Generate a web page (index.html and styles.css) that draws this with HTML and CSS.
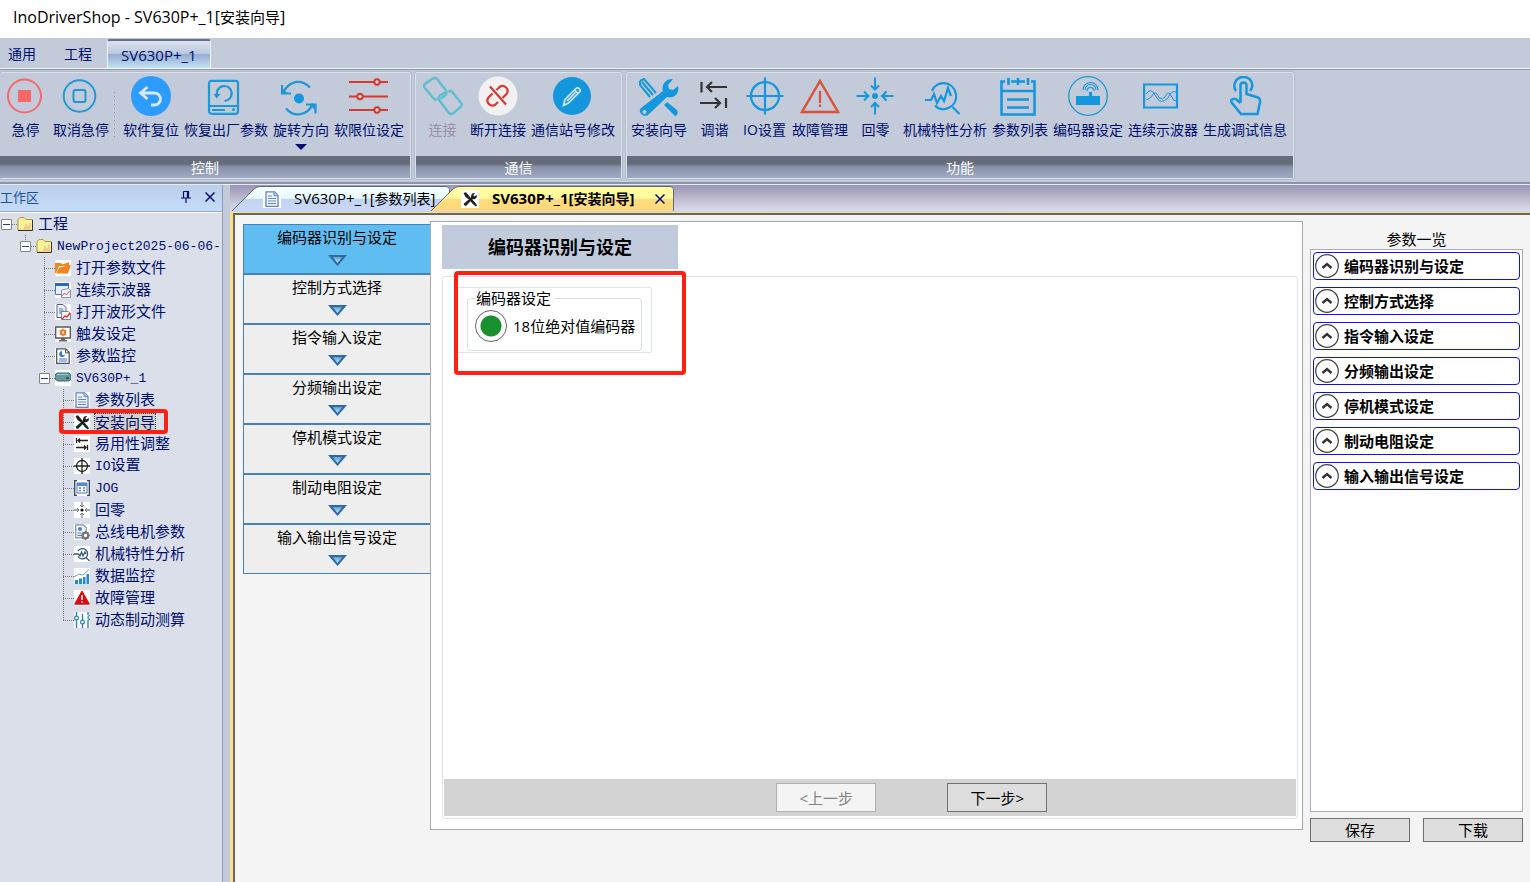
FILE: index.html
```html
<!DOCTYPE html>
<html lang="zh-CN">
<head>
<meta charset="utf-8">
<title>InoDriverShop - SV630P+_1[安装向导]</title>
<link rel="stylesheet" href="styles.css">
</head>
<body>
<svg class="defs" aria-hidden="true">
  <defs>
    <linearGradient id="g-tab" x1="0" y1="0" x2="0" y2="1"><stop offset="0" stop-color="#f2ffff"/><stop offset=".48" stop-color="#e9fbff"/><stop offset=".52" stop-color="#c3d4f3"/><stop offset="1" stop-color="#c9d8f6"/></linearGradient>
    <linearGradient id="g-tab-on" x1="0" y1="0" x2="0" y2="1"><stop offset="0" stop-color="#fffd9c"/><stop offset=".48" stop-color="#fffaa0"/><stop offset=".52" stop-color="#ffdc80"/><stop offset="1" stop-color="#ffd978"/></linearGradient>
    <linearGradient id="g-arrow" x1="0" y1="0" x2="0" y2="1"><stop offset="0" stop-color="#5b9fd0"/><stop offset="1" stop-color="#c5ecfa"/></linearGradient>
    <symbol id="i-down" viewBox="0 0 19 11"><path d="M0 0h19L9.500 11z" fill="#2f68a5"/><path d="M4.500 2h10L9.500 8z" fill="url(#g-arrow)"/></symbol>
    <symbol id="i-up" viewBox="0 0 24 24"><circle cx="12" cy="12" r="11.300" fill="#fff" stroke="#444" stroke-width="1.200"/><path d="M7.500 14L12 10l4.500 4" fill="none" stroke="#333" stroke-width="2.400"/></symbol>
    <symbol id="i-x" viewBox="0 0 10 10"><path d="M.5.5l9 9M9.500.5l-9 9" fill="none" stroke="#000f6e" stroke-width="1.500"/></symbol>
    <symbol id="i-folder" viewBox="0 0 16 16"><path d="M1 3.500l2-2h4l2 2h6.500V14H1z" fill="#fff08c" stroke="#a89848"/><path d="M2 5h13v8.500H2z" fill="#fff29a"/><path d="M8 8h2v2h2V7h2v6H7v-2h1z" fill="#f5c98a"/><path d="M15.500 4v10.500H1" fill="none" stroke="#333"/></symbol>
    <symbol id="i-doc" viewBox="0 0 16 16"><path d="M2 .8h8.500l3.500 3.500v11H2z" fill="#f5f9ff" stroke="#5b82d6" stroke-width="1.300"/><path d="M10 .8v4h4" fill="#b5cbf5" stroke="#5b82d6"/><path d="M4 5h4M4 7.500h8M4 10h8M4 12.500h8" stroke="#5b82d6"/></symbol>
    <symbol id="i-tools" viewBox="0 0 16 16"><path d="M1.500 2l2.500-.8L8 6l5.500 6 1.500 2.500-1.200 1-3-2.500L7 8.500 3.500 6z" fill="#222"/><path d="M2 12.500L9 6.500c-.4-3 1.400-5 4.200-4.500l-1.900 2 1 1.400L14.800 4c.7 2.800-1.800 5-4.300 4.200L4.500 14.500c-1.500 1-3.500-.5-2.500-2z" fill="#222"/></symbol>
    <symbol id="i-scope" viewBox="0 0 16 16"><path d="M.5 1.500h13v11H.5z" fill="#e6efff" stroke="#5270b8"/><path d="M0 1h14v3H0z" fill="#2f62d0"/><path d="M6.500 8l7-1.500 2 1.500v7.500h-9z" fill="#f2f2f2" stroke="#8a95aa"/><path d="M7 14l2.500-3 2 2 3-4" fill="none" stroke="#d55"/></symbol>
    <symbol id="i-wave" viewBox="0 0 16 16"><path d="M2 .5h6l3 3v10H2z" fill="#eef3fb" stroke="#4a5e84"/><path d="M4 5h4M4 7h5M4 9h3" stroke="#4a72a8"/><path d="M6.500 7.500h7l2 2v6h-9z" fill="#f8f8f8" stroke="#7784a0"/><path d="M7 15l3-3 2 1 3-4" fill="none" stroke="#e22" stroke-width="1.300"/></symbol>
    <symbol id="i-net" viewBox="0 0 16 16"><path d="M.7 1h14.600v11H.7z" fill="#fff" stroke="#555" stroke-width="1.300"/><path d="M6 12h4v2h2v1.500H4V14h2z" fill="#666"/><circle cx="8" cy="6.500" r="2.200" fill="none" stroke="#e8772f" stroke-width="2"/><path d="M8 2.500v8M4.500 4.500l7 4M11.500 4.500l-7 4" stroke="#e8772f"/><circle cx="8" cy="6.500" r="1" fill="#fff"/></symbol>
    <symbol id="i-monitor" viewBox="0 0 16 16"><path d="M1.700.8h9l3.500 3.500v11H1.700z" fill="#fff" stroke="#555" stroke-width="1.300"/><path d="M10.500.8v4h3.700" fill="none" stroke="#555"/><path d="M7 3a3 3 0 1 0 3 4H7z" fill="#3976d5"/><path d="M4 11h8M4 13h8" stroke="#3976d5"/></symbol>
    <symbol id="i-drive" viewBox="0 0 16 16"><rect width="16" height="16" fill="#fff"/><path d="M2 3h12l2 2v4l-2 2H3L0 9V5z" fill="#65999b" stroke="#386d70"/><path d="M2 4.500h11" stroke="#a5c9c9"/><path d="M11 7h3v2h-3z" fill="#2e5c60"/></symbol>
    <symbol id="i-open" viewBox="0 0 16 16"><rect width="16" height="16" fill="#fff"/><path d="M0 3h6l1.500 1.500L14 2v4H4L1 13H0z" fill="#ef8422"/><path d="M4.500 7.500L16 5l-3 8.500H1z" fill="#f58320"/></symbol>
    <symbol id="i-adjust" viewBox="0 0 16 16"><path d="M2.500 2v5M13.500 9v5M4 4.500h10M2 11.500h10M6 2.500l-2 2 2 2M10 9.500l2 2-2 2" fill="none" stroke="#222" stroke-width="1.300"/></symbol>
    <symbol id="i-cross" viewBox="0 0 16 16"><circle cx="8" cy="8" r="5.500" fill="none" stroke="#222" stroke-width="1.300"/><path d="M8 0v16M0 8h16" stroke="#222" stroke-width="1.300"/></symbol>
    <symbol id="i-jog" viewBox="0 0 16 16"><path d="M3 .7H.7v14.600H3M13 .7h2.300v14.600H13" fill="none" stroke="#36445c" stroke-width="1.300"/><path d="M3 3h10v10H3z" fill="#fff" stroke="#4675b8"/><path d="M3 3h10v3H3z" fill="#4d8ae0"/><path d="M5 8h2M9 8h2M5 10.500h2M9 10.500h2" stroke="#5b7fc0" stroke-width="1.300"/></symbol>
    <symbol id="i-home" viewBox="0 0 16 16"><path d="M8 0v5M8 11v5M0 8h5M11 8h5" stroke="#888" stroke-width="1.300"/><path d="M6 3l2 2 2-2M6 13l2-2 2 2M3 6l2 2-2 2M13 6l-2 2 2 2" fill="none" stroke="#777"/><circle cx="8" cy="8" r="1.600" fill="#111"/></symbol>
    <symbol id="i-motor" viewBox="0 0 16 16"><path d="M1.700.8h7.500l3 3v10H1.700z" fill="#eef3fb" stroke="#8390a5" stroke-width="1.200"/><circle cx="6" cy="5" r="2" fill="#4b7fd0"/><path d="M3.500 9h4M3.500 11.500h4" stroke="#4b7fd0"/><circle cx="11.500" cy="11.500" r="2.800" fill="#fff" stroke="#777" stroke-width="2.200"/><path d="M11.500 7v1.500M11.500 14.500V16M7 11.500h1.500M14.500 11.500H16M8.500 8.500l1 1M14.500 14.500l-1-1M14.500 8.500l-1 1M8.500 14.500l1-1" stroke="#777" stroke-width="1.500"/></symbol>
    <symbol id="i-analysis" viewBox="0 0 16 16"><path d="M4 5a5.200 5.200 0 1 1 0 5.500M12 11.500l3.500 3.500M0 8h4.500l1.500 2 1.500-4 1.500 4 2-4 1 2" fill="none" stroke="#345a78" stroke-width="1.300"/></symbol>
    <symbol id="i-bars" viewBox="0 0 16 16"><path d="M1 12h3v4H1zM5 10.500h3V16H5zM9 9h2.500v7H9zM12.500 6H15v10h-2.500z" fill="#208bd0"/><path d="M0 9l5-3 4 1 6-5.500" fill="none" stroke="#66a3bf"/></symbol>
    <symbol id="i-warn" viewBox="0 0 16 16"><path d="M8 1.500L15 14H1z" fill="#d80c10" stroke="#d80c10" stroke-linejoin="round" stroke-width="1.500"/><path d="M8 5v5M8 11.200v1.600" stroke="#fff" stroke-width="1.500"/></symbol>
    <symbol id="i-slide" viewBox="0 0 16 16"><path d="M2.500 0v4M2.500 8v8M8.500 2v6M8.500 12v4M14 0v3M14 8v8" stroke="#2885ae" stroke-width="1.400"/><circle cx="2.500" cy="6" r="1.900" fill="none" stroke="#2885ae" stroke-width="1.200"/><circle cx="8.500" cy="10" r="1.900" fill="none" stroke="#2885ae" stroke-width="1.200"/><path d="M16 3.500a2 2 0 1 0 0 4" fill="none" stroke="#2885ae" stroke-width="1.200"/></symbol>
  </defs>
</svg>

<header class="title">InoDriverShop - SV630P+_1[<span class="zh">安装向导</span>]</header>

<nav class="menu">
  <button class="menu-tab">通用</button>
  <button class="menu-tab">工程</button>
  <button class="menu-tab on">SV630P+_1</button>
</nav>

<div class="ribbon">
  <section class="group first">
    <div class="tools">
      <button class="tool"><svg viewBox="0 0 40 40"><circle cx="18.500" cy="20" r="16.500" fill="none" stroke="#f7686a" stroke-width="2"/><path d="M12 14h13v12H12z" fill="#f7686a"/></svg>急停</button>
      <button class="tool"><svg viewBox="0 0 40 40"><circle cx="18.500" cy="20" r="15.800" fill="none" stroke="#1c97d8" stroke-width="1.900"/><rect x="12.500" y="14" width="12" height="12" rx="2" fill="none" stroke="#1c97d8" stroke-width="2"/></svg>取消急停</button>
      <span class="sep"></span>
      <button class="tool"><svg viewBox="0 0 40 40"><circle cx="20" cy="20" r="20" fill="#2c9dff"/><path d="M16.500 11l-7 6 7 6M10 17h13.500a6 6 0 0 1 0 12H20" fill="none" stroke="#d9e8f7" stroke-width="2.800"/></svg>软件复位</button>
      <button class="tool"><svg viewBox="0 0 40 40"><rect x="3" y="4.800" width="29" height="33" rx="2.500" fill="none" stroke="#1c97d8" stroke-width="2.200"/><path d="M3 30h29M6 34h13" stroke="#1c97d8" stroke-width="1.800"/><circle cx="27.500" cy="33.500" r="1.500" fill="#1c97d8"/><path d="M11 19.500a7.500 7.500 0 1 1 7.500 5.500" fill="none" stroke="#1c97d8" stroke-width="2.200"/><path d="M7.500 18h7l-4 4.500z" fill="#1c97d8"/></svg>恢复出厂参数</button>
      <button class="tool"><svg viewBox="0 0 40 40"><path d="M3 14.500C11 3.500 21 3.500 29 11.500M5 32.500c7 8.500 21 8.500 27-5" fill="none" stroke="#1c97d8" stroke-width="2.200"/><path d="M1 9v8.500h9M25 28.500h9.500v9" fill="none" stroke="#1c97d8" stroke-width="2.200"/><path d="M1 12v5.500h6zM28 28.500h6.500v6z" fill="#1c97d8"/><circle cx="18" cy="22.500" r="5" fill="#1497dc"/></svg>旋转方向<i class="caret"></i></button>
      <button class="tool"><svg viewBox="0 0 40 40"><g fill="#d6d7df" stroke="#d8392f" stroke-width="2"><path d="M0 6h39M0 20.500h39M0 34h39"/><circle cx="28" cy="6" r="2.700"/><circle cx="11" cy="20.500" r="2.700"/><circle cx="28" cy="34" r="2.700"/></g></svg>软限位设定</button>
    </div>
    <h2 class="caption">控制</h2>
  </section>
  <section class="group">
    <div class="tools">
      <button class="tool" disabled><svg viewBox="0 0 40 40"><g fill="none" stroke="#5fbdd0" stroke-width="2.400" stroke-linejoin="round"><path d="M14 22.500l-2 1.500L1.500 11.500q-1.500-2 1-4L9 3q3-2 5 0l9 11.500q1.500 3-1 5l-4.500 3.500"/><path d="M22.500 16L17 19.500q-2.500 2-1 4.500l9.500 12.500q2 2.500 5 .5l7-6q2-2 .5-4L28 14.500l-2.500 1.500"/></g></svg>连接</button>
      <button class="tool"><svg viewBox="0 0 40 40"><circle cx="20" cy="20" r="19.500" fill="#f1f1f3"/><path d="M18.500 14l3-3a5 5 0 0 1 7 7l-4 4M20 26l-2.500 2.500a5 5 0 0 1-7-7l4-4M12 10.500l16 18" fill="none" stroke="#d8392f" stroke-width="2.200"/></svg>断开连接</button>
      <button class="tool"><svg viewBox="0 0 40 40"><circle cx="19" cy="20" r="19" fill="#1497dc"/><path d="M10.500 29.500l1.500-6 11-11c2-2 5.500 1.500 3.500 3.500l-11 11zM21.500 14l3.500 3.500M14 25l8.500-8.500" fill="none" stroke="#d5e6f2" stroke-width="1.700"/></svg>通信站号修改</button>
    </div>
    <h2 class="caption">通信</h2>
  </section>
  <section class="group">
    <div class="tools">
      <button class="tool"><svg viewBox="0 0 40 40"><path d="M2 32L24 15c-2-6 3-13 10-12l-5 6 1 4 4 1 5-4c2 7-4 13-11 11L9 39c-4 3-11-3-7-7z" fill="#1497dc"/><circle cx="5.500" cy="36" r="2" fill="#c3cad9"/><path d="M25 29l3-3 10 8q2 5-2 6z" fill="#1497dc"/><path d="M1 5l4-2 12 14M1 5v4l10 12M3 6l11 13M1 5l4-2" fill="none" stroke="#1497dc" stroke-width="2"/></svg>安装向导</button>
      <button class="tool"><svg viewBox="0 0 40 40"><path d="M6.500 6v10.500M31 22v10M12 11h20M5 27h20M17 6l-5 5 5 5M20 22l5 5-5 5" fill="none" stroke="#333" stroke-width="2.200"/></svg>调谐</button>
      <button class="tool"><svg viewBox="0 0 40 40"><circle cx="20" cy="20" r="14" fill="none" stroke="#1497dc" stroke-width="2.200"/><path d="M20 1.500v37M1.500 20h37" stroke="#1497dc" stroke-width="2.200"/></svg>IO设置</button>
      <button class="tool"><svg viewBox="0 0 40 40"><path d="M20 5l18 31H2z" fill="none" stroke="#dc5035" stroke-width="2.400"/><path d="M20 15v12M20 28.500v2.500" stroke="#dc5035" stroke-width="2.200"/></svg>故障管理</button>
      <button class="tool"><svg viewBox="0 0 40 40"><path d="M19 1.500V13M19 27v11.500M.5 20h12M37.500 20h-12M15 9.500l4 4 4-4M15 31l4-4 4 4M8 15.500l4.500 4.500L8 24.500M30.500 15.500L26 20l4.500 4.500" fill="none" stroke="#1497dc" stroke-width="2"/><circle cx="19" cy="20" r="3" fill="#1497dc"/></svg>回零</button>
      <button class="tool"><svg viewBox="0 0 40 40"><path d="M7 15C11 4 28 4 31 18c2 13-14 20-21 11.500M27.500 31l7 7M0 24h6l3-6 3 9 4-7 3 5 4-13 3 8" fill="none" stroke="#1497dc" stroke-width="2.200"/></svg>机械特性分析</button>
      <button class="tool"><svg viewBox="0 0 40 40"><path d="M5 5.500H1.500v33h33v-33H31M11 5.500h14M1.500 15h33M8.500 2v7M18 2v7M28 2v7M7 23.500h22M7 31.500h22" fill="none" stroke="#1497dc" stroke-width="2.600"/></svg>参数列表</button>
      <button class="tool"><svg viewBox="0 0 40 40"><circle cx="20" cy="20" r="19.300" fill="none" stroke="#1497dc" stroke-width="1.300"/><path d="M8 20h13v-4h3v4h8v9H8z" fill="#1497dc"/><path d="M19 15a3.500 3.500 0 0 1 7 0M17 14a5.500 5.500 0 0 1 11 0M15 14a7.500 7.500 0 0 1 15 0" fill="none" stroke="#1497dc" stroke-width="1.100"/></svg>编码器设定</button>
      <button class="tool"><svg viewBox="0 0 40 40"><path d="M1 8.500h33v23H1z" fill="none" stroke="#1497dc" stroke-width="2.200"/><path d="M3 18q5-7 9 1t9 6l4-3q3-8 8-6M3 24q5-1 8-7 3-1 5 5 4 2 6-1 3-8 7 0 1 4 4 4" fill="none" stroke="#1497dc"/></svg>连续示波器</button>
      <button class="tool"><svg viewBox="0 0 40 40"><path d="M15.500 27V9.500q0-3 3-3t3 3V18l10 3q4 1 3.500 5l-2.500 12H16L7 27q-2-3 1-4 2-1 4 1l3.500 3" fill="none" stroke="#1497dc" stroke-width="2.500"/><path d="M11 15c-4-6 0-14 7.500-14S30 9 25 15" fill="none" stroke="#1497dc" stroke-width="2.500"/></svg>生成调试信息</button>
    </div>
    <h2 class="caption">功能</h2>
  </section>
</div>

<div class="work">
  <aside class="side">
    <div class="side-head">
      <h2>工作区</h2>
      <button class="ico" aria-label="固定"><svg width="10" height="12" viewBox="0 0 10 12"><path d="M2.500.5h5v6M2.500.5v6M6.500.5v6M0 7h10M5 7v5" fill="none" stroke="#000f6e" stroke-width="1.200"/></svg></button>
      <button class="ico" aria-label="关闭"><svg width="10" height="10"><use href="#i-x"/></svg></button>
    </div>
    <ul class="tree root">
      <li><div class="row"><span class="slot"><i class="minus"></i></span><svg><use href="#i-folder"/></svg><button>工程</button></div>
        <ul class="tree">
          <li><div class="row"><span class="slot"><i class="minus"></i></span><svg><use href="#i-folder"/></svg><button class="mono">NewProject2025-06-06-</button></div>
            <ul class="tree">
              <li><div class="row"><span class="slot"></span><svg><use href="#i-open"/></svg><button>打开参数文件</button></div></li>
              <li><div class="row"><span class="slot"></span><svg class="w"><use href="#i-scope"/></svg><button>连续示波器</button></div></li>
              <li><div class="row"><span class="slot"></span><svg class="w"><use href="#i-wave"/></svg><button>打开波形文件</button></div></li>
              <li><div class="row"><span class="slot"></span><svg class="w"><use href="#i-net"/></svg><button>触发设定</button></div></li>
              <li><div class="row"><span class="slot"></span><svg class="w"><use href="#i-monitor"/></svg><button>参数监控</button></div></li>
              <li><div class="row"><span class="slot"><i class="minus"></i></span><svg><use href="#i-drive"/></svg><button class="mono">SV630P+_1</button></div>
                <ul class="tree">
                  <li><div class="row"><span class="slot"></span><svg class="w"><use href="#i-doc"/></svg><button>参数列表</button></div></li>
                  <li><div class="row marked"><span class="slot"></span><svg class="w"><use href="#i-tools"/></svg><button class="sel">安装向导</button></div></li>
                  <li><div class="row"><span class="slot"></span><svg class="w"><use href="#i-adjust"/></svg><button>易用性调整</button></div></li>
                  <li><div class="row"><span class="slot"></span><svg class="w"><use href="#i-cross"/></svg><button><span class="mono">IO</span>设置</button></div></li>
                  <li><div class="row"><span class="slot"></span><svg class="w"><use href="#i-jog"/></svg><button class="mono">JOG</button></div></li>
                  <li><div class="row"><span class="slot"></span><svg class="w"><use href="#i-home"/></svg><button>回零</button></div></li>
                  <li><div class="row"><span class="slot"></span><svg class="w"><use href="#i-motor"/></svg><button>总线电机参数</button></div></li>
                  <li><div class="row"><span class="slot"></span><svg class="w"><use href="#i-analysis"/></svg><button>机械特性分析</button></div></li>
                  <li><div class="row"><span class="slot"></span><svg class="w"><use href="#i-bars"/></svg><button>数据监控</button></div></li>
                  <li><div class="row"><span class="slot"></span><svg class="w"><use href="#i-warn"/></svg><button>故障管理</button></div></li>
                  <li><div class="row"><span class="slot"></span><svg class="w"><use href="#i-slide"/></svg><button>动态制动测算</button></div></li>
                </ul>
              </li>
            </ul>
          </li>
        </ul>
      </li>
    </ul>
  </aside>

  <main class="docs">
    <div class="doc-tabs">
      <div class="doc-tab">
        <svg class="shape" viewBox="0 0 218 25" preserveAspectRatio="none"><path d="M0 25L22 3q3-2.500 6-2.500h186q3.500 0 3.500 3V25" fill="url(#g-tab)" stroke="#66697c"/></svg>
        <svg class="badge"><use href="#i-doc"/></svg><button>SV630P+_1[<span class="zh">参数列表</span>]</button>
      </div>
      <div class="doc-tab on">
        <svg class="shape" viewBox="0 0 243 25" preserveAspectRatio="none"><path d="M0 25L22 3q3-2.500 6-2.500h211q3.500 0 3.500 3V25" fill="url(#g-tab-on)" stroke="#66697c"/></svg>
        <svg class="badge"><use href="#i-tools"/></svg><button>SV630P+_1[<span class="zh">安装向导</span>]</button>
        <button class="ico" aria-label="关闭"><svg width="10" height="10"><use href="#i-x"/></svg></button>
      </div>
    </div>
    <div class="doc">
      <nav class="steps">
        <button class="step on">编码器识别与设定<svg><use href="#i-down"/></svg></button>
        <button class="step">控制方式选择<svg><use href="#i-down"/></svg></button>
        <button class="step">指令输入设定<svg><use href="#i-down"/></svg></button>
        <button class="step">分频输出设定<svg><use href="#i-down"/></svg></button>
        <button class="step">停机模式设定<svg><use href="#i-down"/></svg></button>
        <button class="step">制动电阻设定<svg><use href="#i-down"/></svg></button>
        <button class="step">输入输出信号设定<svg><use href="#i-down"/></svg></button>
      </nav>
      <section class="panel">
        <h1>编码器识别与设定</h1>
        <div class="frame">
          <div class="area">
            <div class="box">
              <fieldset>
                <legend>编码器设定</legend>
                <label class="choice"><input type="radio" name="encoder" checked>18位绝对值编码器</label>
              </fieldset>
            </div>
          </div>
          <div class="foot">
            <button class="btn" disabled>&lt;上一步</button>
            <button class="btn">下一步&gt;</button>
          </div>
        </div>
      </section>
      <aside class="overview">
        <h2>参数一览</h2>
        <div class="list">
          <button class="entry"><svg><use href="#i-up"/></svg>编码器识别与设定</button>
          <button class="entry"><svg><use href="#i-up"/></svg>控制方式选择</button>
          <button class="entry"><svg><use href="#i-up"/></svg>指令输入设定</button>
          <button class="entry"><svg><use href="#i-up"/></svg>分频输出设定</button>
          <button class="entry"><svg><use href="#i-up"/></svg>停机模式设定</button>
          <button class="entry"><svg><use href="#i-up"/></svg>制动电阻设定</button>
          <button class="entry"><svg><use href="#i-up"/></svg>输入输出信号设定</button>
        </div>
        <div class="actions">
          <button class="btn">保存</button>
          <button class="btn">下载</button>
        </div>
      </aside>
    </div>
  </main>
</div>
</body>
</html>
```

FILE: styles.css
```css
*, ::before, ::after { box-sizing: border-box; }

body {
  margin: 0;
  min-height: 100vh;
  display: flex;
  flex-direction: column;
  background: #c3cad9;
  color: #000;
  font: 14px/20px "Open Sans", "Noto Sans CJK SC", sans-serif;
}

h1, h2, ul, fieldset, legend { margin: 0; padding: 0; }
h2 { font-size: inherit; font-weight: 400; }

button {
  margin: 0;
  padding: 0;
  border: 0;
  background: none;
  color: inherit;
  font: inherit;
  white-space: nowrap;
}

svg { display: block; flex: none; }
.defs { position: absolute; width: 0; height: 0; }
.ico { display: flex; align-items: center; justify-content: center; }

.title {
  height: 38px;
  padding: 7px 13px;
  background: #fff;
  font-size: 16px;
}
.title .zh { font-size: 15px; }

/* menu tabs */
.menu {
  display: flex;
  height: 31px;
  padding: 1px 0 0 8px;
  border-bottom: 1px solid #f2f5fa;
  color: #000f6e;
}
.menu-tab { padding: 0; margin-right: 28px; }
.menu-tab:nth-child(2) { margin-right: 15px; }
.menu-tab.on {
  margin: 0;
  padding: 0 13px;
  border: 1px solid #eef3fb;
  border-top: 2px solid #66708a;
  border-bottom: 0;
  border-radius: 3px 3px 0 0;
  background: linear-gradient(#dbe3ef 0, #b9c8e0 48%, #97acd2 50%, #c3e2f2 100%);
  font-size: 15px;
}

/* ribbon */
.ribbon {
  display: flex;
  gap: 4px;
  height: 115px;
  padding: 2px 0 3px;
  border-top: 1px solid #8995a8;
  border-bottom: 2px solid #8995a8;
}
.group {
  display: flex;
  flex-direction: column;
  border: 1px solid #dbe2ee;
  border-radius: 2px;
  outline: 1px solid #b0bacb;
  outline-offset: 0;
}
.group.first { border-left: 0; }
.tools {
  display: flex;
  flex: 1;
  gap: 5px;
  padding: 3px 6px 0 4px;
}
.first .tools { padding-left: 3px; }
.tool {
  display: flex;
  flex-direction: column;
  align-items: center;
  gap: 4px;
  min-width: 45px;
  color: #000f6e;
}
.tool svg { width: 40px; height: 40px; }
.tool:disabled { color: #9b91a6; }
.caret {
  border: 6px solid transparent;
  border-top-color: #000f6e;
  border-bottom: 0;
}
.sep {
  width: 4px;
  height: 47px;
  margin-top: 16px;
  background: repeating-linear-gradient(#8b93a5 0 1px, transparent 1px 4px) left / 1px 100% no-repeat;
}
.caption {
  height: 22px;
  line-height: 24px;
  text-align: center;
  color: #fff;
  background: linear-gradient(#676c7b 0 35%, #8791a9 50%, #a0aac3);
}

/* work area */
.work { display: flex; flex: 1; border-top: 1px solid #e8edf5; }

.side {
  width: 223px;
  overflow: hidden;
  display: flex;
  flex-direction: column;
  border-right: 1px solid #8f9bb0;
  background: #dbdfea;
}
.side-head {
  display: flex;
  align-items: center;
  gap: 12px;
  height: 27px;
  padding: 0 6px 2px 0;
  border-bottom: 1px solid #9aabc4;
  background: linear-gradient(#bacfea, #c6dbf8);
}
.side-head h2 { flex: 1; font-size: 13px; color: #1c4e9e; }
.side-head .ico { width: 12px; }

.tree { list-style: none; padding-left: 19px; }
.tree.root { padding: 0; }
.root { border-top: 1px solid #fff; color: #000f6e; font-size: 15px; }
.row { display: flex; align-items: center; height: 22px; position: relative; }
.row > svg { width: 16px; height: 16px; margin-right: 5px; }
.row > svg.w { background: #fff; }
.row > button { padding-bottom: 2px; }
.row > .mono { padding: 2px 0 0; }
.slot {
  width: 17px;
  height: 22px;
  padding: 6px 1px;
  flex: none;
  background:
    repeating-linear-gradient(#777 0 1px, transparent 1px 2px) 6px 0 / 1px 100% no-repeat,
    repeating-linear-gradient(90deg, #777 0 1px, transparent 1px 2px) 6px 11px / 11px 1px no-repeat;
}
li:last-child > .row > .slot {
  background:
    repeating-linear-gradient(#777 0 1px, transparent 1px 2px) 6px 0 / 1px 11px no-repeat,
    repeating-linear-gradient(90deg, #777 0 1px, transparent 1px 2px) 6px 11px / 11px 1px no-repeat;
}
.root > li:last-child > .row > .slot {
  background: repeating-linear-gradient(90deg, #777 0 1px, transparent 1px 2px) 6px 11px / 11px 1px no-repeat;
}
.minus {
  display: block;
  width: 11px;
  height: 11px;
  border: 1px solid #848484;
  border-radius: 1px;
  background: linear-gradient(#1d3f94, #1d3f94) center / 7px 1px no-repeat #fff;
}
.mono { font-family: "Liberation Mono", monospace; font-size: 13px; }
.row > .sel { height: 16px; padding: 0; line-height: 16px; background: #d4d1cc; outline: 1px dotted #333; }
.marked::after {
  content: "";
  position: absolute;
  left: 2px;
  top: -2px;
  width: 109px;
  height: 25px;
  border: 4px solid #ff2014;
  border-radius: 4px;
}

/* documents */
.docs {
  flex: 1;
  min-width: 0;
  margin-left: 7px;
  display: flex;
  flex-direction: column;
  background: #ffdf80;
}
.doc-tabs {
  display: flex;
  align-items: flex-end;
  height: 27px;
  padding-left: 2px;
  border-bottom: 1px solid #c9d3e6;
  background: linear-gradient(#9a96b5, #dcdbe7);
}
.doc-tab {
  position: relative;
  display: flex;
  align-items: center;
  width: 218px;
  height: 25px;
  padding-left: 31px;
  font-size: 15px;
}
.doc-tab .zh { font-size: 14px; }
.doc-tab.on { width: 243px; margin-left: -19px; padding-left: 30px; font-weight: 700; }
.shape { position: absolute; inset: 0; width: 100%; height: 100%; }
.badge { position: relative; width: 18px; height: 18px; margin-right: 13px; padding: 1px; background: #fff; }
.doc-tab button { position: relative; }
.doc-tab .ico { margin: 0 9px 0 auto; }

.doc {
  flex: 1;
  display: flex;
  margin: 1px 0 0 3px;
  padding: 6px 7px 0 8px;
  border-top: 2px solid #65666a;
  border-left: 2px solid #65666a;
  background: #f4f4f4;
  font-size: 15px;
}
.steps { width: 187px; padding-top: 3px; }
.step {
  display: flex;
  flex-direction: column;
  align-items: center;
  gap: 8px;
  width: 100%;
  height: 50px;
  padding-top: 2px;
  border: 1px solid #4682b4;
  border-right: 0;
  background: #eee;
}
.step.on { background: #5fbdf2; }
.step svg { width: 19px; height: 11px; }

.panel {
  flex: 1;
  display: flex;
  flex-direction: column;
  align-items: flex-start;
  margin-bottom: 52px;
  padding: 3px 4px 10px 11px;
  border: 1px solid #aaa;
  background: #fff;
}
.panel h1 {
  width: 236px;
  margin-bottom: 7px;
  text-align: center;
  font-size: 18px;
  line-height: 44px;
  background: #c2cbdc;
}
.frame {
  flex: 1;
  align-self: stretch;
  display: flex;
  flex-direction: column;
  padding: 1px;
  border: 1px solid #dce5ec;
  border-radius: 3px;
}
.area { flex: 1; position: relative; padding: 9px 11px; }
.area::after {
  content: "";
  position: absolute;
  left: 10px;
  top: -7px;
  width: 232px;
  height: 104px;
  border: 4px solid #ff2014;
  border-radius: 4px;
}
.box {
  width: 197px;
  padding: 0 9px 1px 11px;
  border: 1px solid #dce5ec;
  border-radius: 2px;
}
fieldset {
  min-width: 0;
  padding: 2px 7px 8px;
  border: 1px solid #d5dfe5;
  border-radius: 4px;
}
legend { padding: 0 3px 0 1px; }
.choice { display: flex; align-items: center; gap: 6px; white-space: nowrap; }
.choice input {
  appearance: none;
  flex: none;
  width: 32px;
  height: 32px;
  margin: 0;
  border: 1px solid #666;
  border-radius: 50%;
  background: radial-gradient(circle, #18912e 10px, #fff 11px);
}
.foot {
  display: flex;
  gap: 71px;
  padding: 4px 0 4px 39%;
  margin-bottom: 1px;
  background: #d3d3d3;
}
.btn {
  width: 100px;
  height: 29px;
  border: 1px solid #707070;
  background: #ddd;
}
.btn:disabled { border-color: #adb2b5; background: #f4f4f4; color: #838383; }

.overview {
  width: 213px;
  margin: 0 0 40px 7px;
  display: flex;
  flex-direction: column;
}
.overview h2 { padding: 8px 0 0; text-align: center; }
.list {
  flex: 1;
  display: flex;
  flex-direction: column;
  gap: 7px;
  padding: 2px;
  border: 1px solid #abadb3;
  background: #fff;
}
.entry {
  display: flex;
  align-items: center;
  gap: 5px;
  height: 28px;
  padding: 0 1px;
  border: 1px solid #1010e8;
  border-radius: 4px;
  font-weight: 700;
}
.entry svg { width: 24px; height: 24px; }
.actions { display: flex; justify-content: space-between; margin-top: 6px; }
.actions .btn { height: 24px; }
```
